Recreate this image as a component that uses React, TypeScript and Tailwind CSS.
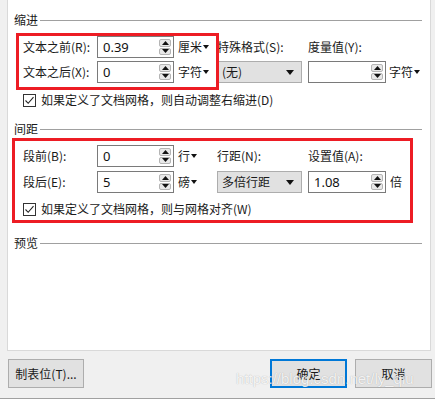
import React from 'react';

const font = { fontFamily: '"Noto Sans CJK SC", "Noto Sans", sans-serif' };

const SectionHeader = ({ title }: { title: string }) => (
  <div className="flex items-center h-[16px] pl-[6px] pr-[8px]">
    <span className="text-[12px] leading-[16px] text-[#1a1a1a]">{title}</span>
    <div className="flex-1 h-px bg-[#a0a0a0] ml-[2px]" />
  </div>
);

const Spinner = () => (
  <div className="flex flex-col gap-px h-full py-[2px] pr-[2px]">
    <div className="flex-1 w-[12px] bg-[#e8e8e8] border border-[#b4b4b4] rounded-[2px] flex items-center justify-center">
      <svg width="7" height="4" viewBox="0 0 7 4"><path d="M0 4 L3.5 0 L7 4 Z" fill="#111" /></svg>
    </div>
    <div className="flex-1 w-[12px] bg-[#e8e8e8] border border-[#b4b4b4] rounded-[2px] flex items-center justify-center">
      <svg width="7" height="4" viewBox="0 0 7 4"><path d="M0 0 L7 0 L3.5 4 Z" fill="#111" /></svg>
    </div>
  </div>
);

const SpinInput = ({ value, width }: { value: string; width: string }) => (
  <div className={`${width} h-[22px] border border-[#7a7a7a] bg-white flex items-center`}>
    <span className="flex-1 pl-[5px] text-[13px] leading-[20px] text-[#111]" style={{ fontFamily: '"Noto Sans", "Noto Sans CJK SC", sans-serif' }}>
      {value}
    </span>
    <Spinner />
  </div>
);

const Unit = ({ text, arrow = true }: { text: string; arrow?: boolean }) => (
  <div className="flex items-center h-[22px] text-[12px] text-[#1a1a1a]">
    <span>{text}</span>
    {arrow && (
      <svg width="6" height="4" viewBox="0 0 6 4" className="ml-[1px]"><path d="M0 0 L6 0 L3 4 Z" fill="#111" /></svg>
    )}
  </div>
);

const Select = ({ text }: { text: string }) => (
  <div className="w-[85px] h-[22px] bg-[#e1e1e1] border border-[#adadad] flex items-center justify-between pl-[4px] pr-[7px]">
    <span className="text-[12px] text-[#1a1a1a]">{text}</span>
    <svg width="8" height="5" viewBox="0 0 8 5"><path d="M0 0 L8 0 L4 5 Z" fill="#111" /></svg>
  </div>
);

const Label = ({ text }: { text: string }) => (
  <div className="h-[22px] flex items-center text-[12px] text-[#1a1a1a] whitespace-nowrap">{text}</div>
);

const Checkbox = ({ text }: { text: string }) => (
  <div className="flex items-center h-[16px] pl-[15px]">
    <div className="w-[13px] h-[13px] border border-[#333] bg-white flex items-center justify-center">
      <svg width="11" height="11" viewBox="0 0 11 11">
        <path d="M1.5 5.5 L4.2 8.3 L9.5 2.2" fill="none" stroke="#222" strokeWidth="1.1" />
      </svg>
    </div>
    <span className="ml-[5px] text-[12px] text-[#1a1a1a]">{text}</span>
  </div>
);

const gridCols = 'grid grid-cols-[74px_77px_43px_91px_78px_1fr] pl-[15px]';

export default function App() {
  return (
    <div className="relative w-[435px] h-[399px] bg-[#f0f0f0] overflow-hidden flex flex-col" style={font}>

      <div className="ml-[7px] w-[424px] h-[351px] bg-white border-x border-b border-[#d9d9d9] flex flex-col">

        <div className="pt-[12px]">
          <SectionHeader title="缩进" />
        </div>

        <div className={`${gridCols} gap-y-[3px] mt-[8px]`}>
          <Label text="文本之前(R):" />
          <SpinInput value="0.39" width="w-[77px]" />
          <div className="pl-[4px]"><Unit text="厘米" /></div>
          <Label text="特殊格式(S):" />
          <Label text="度量值(Y):" />
          <div />

          <Label text="文本之后(X):" />
          <SpinInput value="0" width="w-[77px]" />
          <div className="pl-[4px]"><Unit text="字符" /></div>
          <Select text="(无)" />
          <SpinInput value="" width="w-[78px]" />
          <div className="pl-[3px]"><Unit text="字符" /></div>
        </div>

        <div className="mt-[9px]">
          <Checkbox text="如果定义了文档网格，则自动调整右缩进(D)" />
        </div>

        <div className="mt-[13px]">
          <SectionHeader title="间距" />
        </div>

        <div className={`${gridCols} gap-y-[4px] mt-[8px]`}>
          <Label text="段前(B):" />
          <SpinInput value="0" width="w-[77px]" />
          <div className="pl-[4px]"><Unit text="行" /></div>
          <Label text="行距(N):" />
          <Label text="设置值(A):" />
          <div />

          <Label text="段后(E):" />
          <SpinInput value="5" width="w-[77px]" />
          <div className="pl-[4px]"><Unit text="磅" /></div>
          <Select text="多倍行距" />
          <SpinInput value="1.08" width="w-[78px]" />
          <div className="pl-[4px]"><Unit text="倍" arrow={false} /></div>
        </div>

        <div className="mt-[8px]">
          <Checkbox text="如果定义了文档网格，则与网格对齐(W)" />
        </div>

        <div className="mt-[18px]">
          <SectionHeader title="预览" />
        </div>
      </div>

      <div className="flex mt-[8px] h-[29px]">
        <button className="ml-[8px] w-[76px] h-[29px] bg-[#e1e1e1] border border-[#adadad] text-[12px] text-[#1a1a1a]">
          制表位(T)...
        </button>
        <button className="ml-[186px] w-[77px] h-[29px] bg-[#e1e1e1] border-2 border-[#0078d7] text-[12px] text-[#1a1a1a]">
          确定
        </button>
        <button className="ml-[8px] w-[77px] h-[29px] bg-[#e1e1e1] border border-[#adadad] text-[12px] text-[#1a1a1a]">
          取消
        </button>
      </div>

      <div className="mt-[10px] h-px bg-[#a0a0a0]" />

      {/* annotation boxes */}
      <div className="absolute left-[16px] top-[33px] w-[203px] h-[57px] border-[3px] border-[#ed1c24] pointer-events-none" />
      <div className="absolute left-[12px] top-[138px] w-[401px] h-[85px] border-[3px] border-[#ed1c24] pointer-events-none" />

      {/* watermark */}
      <div
        className="absolute left-[236px] top-[368px] text-[15px] text-white/85 pointer-events-none"
        style={{ fontFamily: '"Liberation Sans", Arial, sans-serif', textShadow: '0 0 1px rgba(0,0,0,0.3)' }}
      >
        https://blog.csdn.net/ly_qiu
      </div>
    </div>
  );
}
